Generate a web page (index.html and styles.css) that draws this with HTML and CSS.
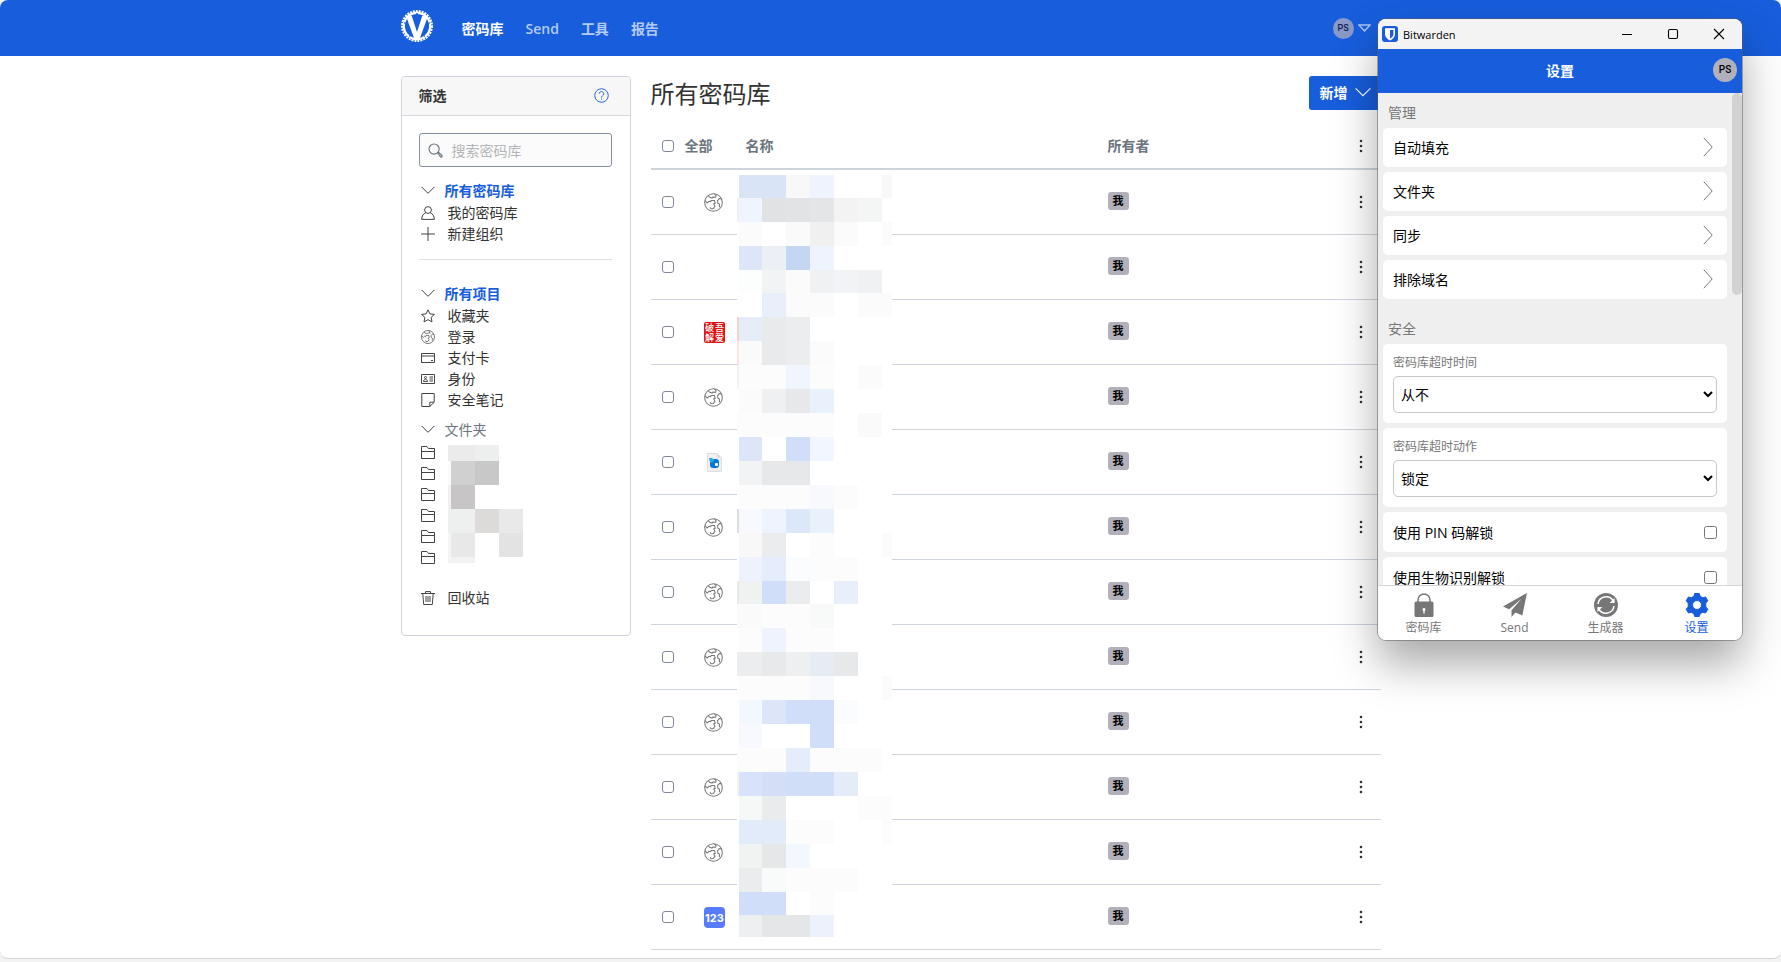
FILE: index.html
```html
<!DOCTYPE html>
<html lang="zh-CN">
<head>
<meta charset="utf-8">
<title>所有密码库</title>
<link rel="stylesheet" href="styles.css">
</head>
<body>
<svg class="sprite" aria-hidden="true">
  <symbol id="i-chevron" viewBox="0 0 14 14"><path d="M.5 3.800 7 10.300l6.500-6.500"/></symbol>
  <symbol id="i-right" viewBox="0 0 10 20"><path d="M.8.8 9.200 10 .8 19.200"/></symbol>
  <symbol id="i-user" viewBox="0 0 14 14"><circle cx="7" cy="4" r="3.400"/><path d="M4.800 6.800C2.500 7.600.7 9.800.7 13.400h12.600c0-3.600-1.800-5.800-4.100-6.600"/></symbol>
  <symbol id="i-plus" viewBox="0 0 14 14"><path d="M7 0v14M0 7h14"/></symbol>
  <symbol id="i-star" viewBox="0 0 14 14"><path d="m7 .8 1.900 4.100 4.500.5-3.300 3 .9 4.500L7 10.700l-4 2.200.9-4.500-3.300-3 4.500-.5z"/></symbol>
  <symbol id="i-globe" viewBox="0 0 20 20"><circle cx="10" cy="10" r="9.300"/><path d="M4.500 2.800 6 4.600l2.500.7.800-1 3 .2.400-1.700L11 1M1 8l2.300 2.600L5.200 8.800l1.800.4.500-1.400 3.500.1.800 2.900-1.600.7 1.300 2.300-1.600 2.500-2.700.3-.7-1.700M18.400 6l-2.300-.1-1.800 2.200.3 2.500 1.600 1 .1 3.500"/></symbol>
  <symbol id="i-card" viewBox="0 0 14 14"><path d="M.5 2.500h13v9H.5zM.5 5h13M10 9.500h2"/></symbol>
  <symbol id="i-id" viewBox="0 0 14 14"><path d="M.5 2.500h13v9H.5zM2.500 9.500c0-3 4-3 4 0zM8.500 5H12M8.500 7H12M8.500 9H12"/><circle cx="4.500" cy="5.500" r="1"/></symbol>
  <symbol id="i-note" viewBox="0 0 14 14"><path d="M.8.5h12.400v8.700l-4.400 4.300h-8zM13 9.200H8.800v4.300"/></symbol>
  <symbol id="i-folder" viewBox="0 0 14 14"><path d="M.5 13.500v-12H6l1.500 2h6v10zM.5 6.500h13"/></symbol>
  <symbol id="i-trash" viewBox="0 0 14 14"><path d="M0 2.500h14M4.500 2.300V.6h5v1.700M1.800 2.800l.9 10.700h8.600l.9-10.700M5 5v6M7 5v6M9 5v6"/></symbol>
  <symbol id="i-search" viewBox="0 0 16 16"><circle cx="6.500" cy="6.500" r="5.400"/><path d="m10.200 10.400.9-.6 3.700 3.500c.8.900-.6 2.200-1.400 1.400z"/></symbol>
  <symbol id="i-dots" viewBox="0 0 4 14"><circle cx="2" cy="2" r="1.300"/><circle cx="2" cy="7" r="1.300"/><circle cx="2" cy="12" r="1.300"/></symbol>
</svg>

<div class="browser">
  <header class="topbar">
    <div class="container topbar-inner">
      <svg class="logo" viewBox="0 0 32 32" role="img" aria-label="Vaultwarden">
        <circle class="logo-teeth" cx="16" cy="16" r="15"/>
        <circle class="logo-ring" cx="16" cy="16" r="13.200"/>
        <path class="logo-mark" d="M5 6h5.800L16 22l5.200-16H27l-8.200 22.500h-5.600z"/>
        <circle class="logo-dot" cx="16" cy="4" r="1"/><circle class="logo-dot" cx="3.800" cy="13" r=".8"/><circle class="logo-dot" cx="28.200" cy="13" r=".8"/><circle class="logo-dot" cx="8.700" cy="26" r=".8"/><circle class="logo-dot" cx="23.300" cy="26" r=".8"/>
      </svg>
      <nav class="mainnav">
        <a class="current" href="#vault">密码库</a>
        <a href="#send">Send</a>
        <a href="#tools">工具</a>
        <a href="#reports">报告</a>
      </nav>
      <button class="account" type="button" aria-label="账户">
        <span class="avatar">PS</span>
        <svg width="13" height="8" viewBox="0 0 13 8"><path d="M1 1h11L6.500 7z"/></svg>
      </button>
    </div>
  </header>

  <main class="container layout">
    <aside class="filters">
      <div class="filters-head">
        <h2>筛选</h2>
        <a href="#help" aria-label="帮助"><svg class="help" viewBox="0 0 16 16"><circle cx="8" cy="8" r="7.200"/><path d="M5.500 6.200c0-3.200 5-3.200 5 0 0 1.800-2.500 2-2.500 4M8 11.200v1.200"/></svg></a>
      </div>
      <div class="filters-body">
        <label class="search">
          <svg class="search-icon"><use href="#i-search"/></svg>
          <input type="search" placeholder="搜索密码库" aria-label="搜索密码库">
        </label>
        <section class="group">
          <h3 class="active"><svg class="ico"><use href="#i-chevron"/></svg><a href="#all">所有密码库</a></h3>
          <ul>
            <li><svg class="ico"><use href="#i-user"/></svg><a href="#mine">我的密码库</a></li>
            <li><svg class="ico"><use href="#i-plus"/></svg><a href="#org">新建组织</a></li>
          </ul>
        </section>
        <hr>
        <section class="group">
          <h3 class="active"><svg class="ico"><use href="#i-chevron"/></svg><a href="#items">所有项目</a></h3>
          <ul>
            <li><svg class="ico"><use href="#i-star"/></svg><a href="#fav">收藏夹</a></li>
            <li><svg class="ico"><use href="#i-globe"/></svg><a href="#login">登录</a></li>
            <li><svg class="ico"><use href="#i-card"/></svg><a href="#card">支付卡</a></li>
            <li><svg class="ico"><use href="#i-id"/></svg><a href="#identity">身份</a></li>
            <li><svg class="ico"><use href="#i-note"/></svg><a href="#note">安全笔记</a></li>
          </ul>
        </section>
        <section class="group folders">
          <h3><svg class="ico"><use href="#i-chevron"/></svg><a href="#folders">文件夹</a></h3>
          <ul>
            <li><svg class="ico"><use href="#i-folder"/></svg></li>
            <li><svg class="ico"><use href="#i-folder"/></svg></li>
            <li><svg class="ico"><use href="#i-folder"/></svg></li>
            <li><svg class="ico"><use href="#i-folder"/></svg></li>
            <li><svg class="ico"><use href="#i-folder"/></svg></li>
            <li><svg class="ico"><use href="#i-folder"/></svg></li>
          </ul>
          <svg class="folder-mask" viewBox="0 0 75 118" shape-rendering="crispEdges" aria-hidden="true">
            <path fill="#fff" d="M0 0h75v118H0z"/>
            <path fill="#ebebeb" d="M0 0h27v16H0z"/><path fill="#edeeee" d="M27 0h24v16H27z"/>
            <path fill="#fafafa" d="M0 16h3v24H0z"/><path fill="#d0d0d0" d="M3 16h24v24H3z"/><path fill="#c8c8c8" d="M27 16h24v24H27z"/>
            <path fill="#f1f1f1" d="M0 40h3v24H0z"/><path fill="#c8c5c7" d="M3 40h24v24H3z"/>
            <path fill="#eef0ef" d="M0 64h27v24H0z"/><path fill="#dcdbda" d="M27 64h24v24H27z"/><path fill="#e9e9e9" d="M51 64h24v24H51z"/>
            <path fill="#f4f4f4" d="M0 88h3v30H0z"/><path fill="#e8e8e8" d="M3 88h24v24H3z"/><path fill="#e3e3e3" d="M51 88h24v24H51z"/><path fill="#f2f2f2" d="M3 112h24v6H3z"/>
          </svg>
        </section>
        <section class="group trash">
          <ul><li><svg class="ico"><use href="#i-trash"/></svg><a href="#trash">回收站</a></li></ul>
        </section>
      </div>
    </aside>

    <section class="vault">
      <div class="vault-head">
        <h1>所有密码库</h1>
        <button class="add" type="button">新增 <svg class="ico"><use href="#i-chevron"/></svg></button>
      </div>
      <div class="table-wrap">
        <table>
          <colgroup><col class="c-check"><col class="c-icon"><col class="c-name"><col><col class="c-more"></colgroup>
          <thead>
            <tr>
              <th colspan="2"><label class="all"><input class="tick" type="checkbox"> 全部</label></th>
              <th>名称</th>
              <th>所有者</th>
              <th class="more"><button type="button" aria-label="选项"><svg class="dots"><use href="#i-dots"/></svg></button></th>
            </tr>
          </thead>
          <tbody id="rows"></tbody>
        </table>
        <svg class="name-mask" id="mask" viewBox="0 0 155 762" shape-rendering="crispEdges" aria-hidden="true"></svg>
      </div>
    </section>
  </main>
</div>

<div class="window">
  <div class="titlebar">
    <svg class="app-icon" viewBox="0 0 16 16"><rect width="16" height="16" rx="3" fill="#175ddc"/><path fill="#fff" d="M3 2.200h10v6c0 3-2.500 5-5 6.200-2.500-1.200-5-3.200-5-6.200z"/><path fill="#175ddc" d="M8 4h3.400v4.300c0 1.800-1.700 3.300-3.400 4.200z"/></svg>
    <span class="app-name">Bitwarden</span>
    <button type="button" aria-label="最小化"><svg viewBox="0 0 12 12"><path d="M1 6.500h10"/></svg></button>
    <button type="button" aria-label="最大化"><svg viewBox="0 0 12 12"><rect x="1.500" y="1.500" width="9" height="9" rx="1.500"/></svg></button>
    <button type="button" aria-label="关闭"><svg viewBox="0 0 12 12"><path d="m1 1 10 10M11 1 1 11"/></svg></button>
  </div>
  <div class="popup-head"><h2>设置</h2><span class="avatar">PS</span></div>
  <div class="popup-body">
    <div class="settings">
      <h3>管理</h3>
      <a class="box row" href="#autofill">自动填充<svg class="arrow"><use href="#i-right"/></svg></a>
      <a class="box row" href="#folder">文件夹<svg class="arrow"><use href="#i-right"/></svg></a>
      <a class="box row" href="#sync">同步<svg class="arrow"><use href="#i-right"/></svg></a>
      <a class="box row" href="#domains">排除域名<svg class="arrow"><use href="#i-right"/></svg></a>
      <h3 class="second">安全</h3>
      <div class="box field"><label for="timeout">密码库超时时间</label><select id="timeout"><option>从不</option></select></div>
      <div class="box field"><label for="action">密码库超时动作</label><select id="action"><option>锁定</option></select></div>
      <label class="box row tall">使用 PIN 码解锁<input type="checkbox"></label>
      <label class="box row tall">使用生物识别解锁<input type="checkbox"></label>
    </div>
    <div class="scroll"><div class="thumb"></div></div>
  </div>
  <nav class="tabs">
    <a href="#t1"><svg viewBox="0 0 24 24"><path fill="currentColor" d="M4 8.500h16a1.500 1.500 0 0 1 1.500 1.500v12.500A1.500 1.500 0 0 1 20 24H4a1.500 1.500 0 0 1-1.500-1.500V10A1.500 1.500 0 0 1 4 8.500z"/><path fill="none" stroke="currentColor" stroke-width="1.500" d="M6 9V7a6 6 0 0 1 12 0v2"/><path fill="#fff" d="M12 15a1.500 1.500 0 0 1 .7 2.800V20.500h-1.400v-2.700A1.500 1.500 0 0 1 12 15z"/></svg>密码库</a>
    <a href="#t2"><svg viewBox="0 0 24 24"><path fill="currentColor" d="M24 0 0 13.500l6.200 2.800L18.800 5.500 8.500 17.300V24l4-4.500 6.800 2.900z"/></svg>Send</a>
    <a href="#t3"><svg viewBox="0 0 24 24"><circle cx="12" cy="12" r="12" fill="currentColor"/><path fill="none" stroke="#fff" stroke-width="1.500" d="M4 11a8.200 8.200 0 0 1 15-3.500M20 13a8.200 8.200 0 0 1-15 3.500"/><path fill="#fff" d="M20.600 5v5h-5zM3.400 19v-5h5z"/></svg>生成器</a>
    <a class="on" href="#t4"><svg viewBox="0 0 24 24"><path fill="currentColor" stroke="currentColor" stroke-linejoin="round" fill-rule="evenodd" d="M9.700.5h4.600l.8 2.700 2.600 1.500 2.900-.7 2.200 3.800-2 2.200v4l2 2.200-2.200 3.800-2.900-.7-2.600 1.500-.8 2.700H9.700l-.8-2.700-2.600-1.500-2.900.7-2.200-3.800 2-2.200v-4l-2-2.200L3.400 4l2.900.7 2.600-1.500zM12 7.500a4.500 4.500 0 1 0 0 9 4.500 4.500 0 0 0 0-9z"/></svg>设置</a>
  </nav>
</div>
<script src="app.js"></script>
</body>
</html>
```

FILE: styles.css
```css
* { box-sizing: border-box; }

body {
  margin: 0;
  background: #f3f3f3;
  color: #333;
  font-family: "Open Sans", "Noto Sans CJK SC", sans-serif;
  font-size: 14px;
  line-height: 21px;
}

h1, h2, h3, ul { margin: 0; padding: 0; font-weight: 400; }
ul { list-style: none; }
a { color: inherit; text-decoration: none; }
button { font: inherit; padding: 0; border: 0; background: none; }

.sprite { display: none; }

.browser {
  min-height: calc(100vh - 3px);
  border-bottom: 1px solid #d5d5d5;
  border-radius: 8px;
  background: #fff;
  overflow: hidden;
}

.container { width: 980px; max-width: 100%; margin: 0 auto; }

.topbar { background: #175ddc; }
.topbar-inner { display: flex; align-items: center; height: 56px; }

.logo { width: 32px; height: 32px; margin-bottom: 4px; }
.logo-teeth { fill: none; stroke: #fff; stroke-width: 2; stroke-dasharray: 2 1; }
.logo-ring { fill: none; stroke: #fff; stroke-width: 2.2; }
.logo-mark { fill: #fff; }
.logo-dot { fill: #175ddc; }

.mainnav { display: flex; gap: 22px; margin-left: 29px; font-weight: 600; }
.mainnav a { color: #b4cbf5; }
.mainnav .current { color: #fff; font-weight: 700; }

.account { display: flex; align-items: center; gap: 4px; margin-left: auto; margin-right: 10px; }
.account svg { fill: none; stroke: #a9c3f3; stroke-width: 1.5; }
.avatar {
  width: 21px;
  height: 21px;
  border-radius: 50%;
  background: #8a9ac8;
  color: #0d2252;
  font-family: "Roboto", sans-serif;
  font-size: 9px;
  font-weight: 500;
  line-height: 21px;
  text-align: center;
}

.layout { display: flex; align-items: flex-start; gap: 20px; padding-top: 20px; }

.filters { width: 230px; border: 1px solid #ced4dc; border-radius: 4px; }
.filters-head {
  display: flex;
  align-items: center;
  justify-content: space-between;
  height: 39px;
  padding: 0 21px 2px 17px;
  border-bottom: 1px solid #d5d8dc;
  border-radius: 3px 3px 0 0;
  background: #f7f7f7;
}
.filters-head h2 { font-size: 14px; font-weight: 700; }
.filters-head a { display: flex; }
.help { width: 15px; height: 15px; fill: none; stroke: #175ddc; }
.filters-body { padding: 17px 18px 27px 17px; }

.search {
  display: flex;
  align-items: center;
  gap: 9px;
  height: 34px;
  padding: 0 8px;
  border: 1px solid #868f9f;
  border-radius: 3px;
  background: #fbfbfb;
}
.search-icon { flex: none; width: 15px; height: 15px; fill: none; stroke: #6c757d; stroke-width: 1.2; }
.search input { min-width: 0; flex: 1; padding: 0; border: 0; outline: 0; background: none; font: inherit; }
.search input::placeholder { color: #b3b5b8; }

.ico { flex: none; width: 14px; height: 14px; fill: none; stroke: #444; overflow: visible; }
.group { position: relative; margin-top: 13px; padding-left: 2px; }
.group h3 { display: flex; align-items: center; gap: 10px; height: 22px; padding-bottom: 2px; font-size: 14px; color: #6c757d; }
.group .active { color: #175ddc; font-weight: 700; }
.group li { display: flex; align-items: center; gap: 13px; height: 21px; }
hr { height: 1px; margin: 15px 0 23px; border: 0; background: #dfe1e3; }
hr + .group { margin-top: 0; }
.folders { margin-top: 9px; }
.trash { margin-top: 20px; }
.folder-mask { position: absolute; left: 29px; top: 26px; width: 75px; height: 118px; }

.vault { flex: 1; min-width: 0; }
.vault-head { display: flex; justify-content: space-between; align-items: center; }
.vault-head h1 { padding-top: 2px; font-size: 24px; line-height: 32px; }
.add {
  display: flex;
  align-items: center;
  gap: 7px;
  height: 34px;
  padding: 0 10px 2px 11px;
  border-radius: 3px;
  background: #175ddc;
  color: #fff;
  font-weight: 700;
}
.add .ico { stroke: #fff; width: 16px; height: 16px; }

.table-wrap { position: relative; margin-top: 15px; }
table { width: 100%; table-layout: fixed; border-collapse: separate; border-spacing: 0; }
.c-check { width: 44px; }
.c-icon { width: 42px; }
.c-name { width: 362px; }
.c-more { width: 40px; }
th { height: 45px; padding: 0 9px 2px; border-bottom: 2px solid #ced4dc; color: #6c757d; font-weight: 700; text-align: left; }
td { height: 65px; padding: 0 9px; border-bottom: 1px solid #ced4dc; vertical-align: middle; }
td:first-child, th:first-child { padding-left: 11px; }
.all { display: flex; align-items: center; gap: 11px; }
.tick {
  display: block;
  appearance: none;
  width: 12px;
  height: 12px;
  margin: 0;
  border: 1px solid #7f8898;
  border-radius: 3px;
  background: #fff;
}
.item-icon { display: block; width: 21px; height: 21px; }
.globe { width: 19px; height: 19px; margin-top: 1px; fill: none; stroke: #777; stroke-width: 1.1; }
.seal-text, .num-text { fill: #fff; font-family: "Noto Sans CJK SC", sans-serif; font-size: 9px; font-weight: 500; }
.num-text { font-family: "Inter", sans-serif; font-size: 11px; font-weight: 700; text-anchor: middle; }
.badge {
  display: block;
  width: 21px;
  height: 18px;
  margin-bottom: 2px;
  border-radius: 3px;
  background: #b2b0bb;
  color: #000;
  font-size: 11px;
  font-weight: 700;
  line-height: 18px;
  text-align: center;
}
.more { text-align: right; }
.more button { display: block; margin-left: auto; padding: 0 9px; }
.dots { display: block; width: 4px; height: 14px; fill: #333; }
.name-mask { position: absolute; left: 86px; top: 50px; width: 155px; height: 762px; }

.window {
  position: absolute;
  top: 19px;
  right: 39px;
  display: flex;
  flex-direction: column;
  width: 364px;
  height: 621px;
  border-radius: 8px;
  background: #fff;
  color: #000;
  overflow: hidden;
  box-shadow: 0 0 0 1px rgba(90, 90, 90, .5), 0 24px 44px rgba(0, 0, 0, .34);
}
.titlebar { display: flex; align-items: center; height: 30px; padding-left: 4px; background: #f3f3f3; font-size: 11px; }
.app-icon { width: 16px; height: 16px; }
.app-name { margin: 0 auto 0 5px; }
.titlebar button { display: flex; justify-content: center; width: 46px; }
.titlebar button svg { width: 12px; height: 12px; fill: none; stroke: #000; stroke-width: 1.1; }

.popup-head {
  display: grid;
  grid-template-columns: 1fr auto 1fr;
  align-items: center;
  height: 44px;
  padding: 0 5px 2px;
  background: #175ddc;
  color: #fff;
}
.popup-head h2 { grid-column: 2; font-size: 14px; font-weight: 700; }
.popup-head .avatar { justify-self: end; width: 24px; height: 24px; background: #b2b0bb; color: #000; font-size: 10px; line-height: 24px; }

.popup-body { display: flex; flex: 1; min-height: 0; background: #efefef; overflow: hidden; }
.settings { flex: 1; padding: 9px 5px 0; }
.settings h3 { margin-bottom: 5px; padding-left: 5px; font-size: 14px; color: #777; }
.settings .second { margin-top: 19px; }
.box { margin-bottom: 5px; padding: 0 10px; border-radius: 5px; background: #fff; }
.row { display: flex; align-items: center; justify-content: space-between; height: 39px; }
.tall { height: 40px; }
.row input { width: 13px; height: 13px; margin: 0; }
.arrow { width: 10px; height: 20px; margin: 0 4px 2px 0; fill: none; stroke: #777; }
.field { padding-top: 10px; padding-bottom: 10px; }
.field label { display: block; margin-bottom: 4px; color: #777; font-size: 12px; line-height: 18px; }
.field select { display: block; width: 100%; height: 37px; padding: 0 3px; border: 1px solid #c8c8c8; border-radius: 5px; background: #fff; color: #000; font: inherit; }
.scroll { width: 10px; }
.thumb { height: 202px; border-radius: 5px; background: #d2d2d2; }

.tabs { display: flex; height: 55px; padding-top: 7px; border-top: 1px solid #d5d5d5; background: #fff; color: #777; font-size: 12px; line-height: 18px; }
.tabs a { display: flex; flex: 1; flex-direction: column; align-items: center; gap: 2px; }
.tabs svg { width: 24px; height: 24px; }
.tabs .on { color: #175ddc; }
```

FILE: app.js
```js
const icons = {
  globe: '<svg class="item-icon globe"><use href="#i-globe"/></svg>',
  none: '',
  seal: '<svg class="item-icon" viewBox="0 0 21 21"><rect width="21" height="21" rx="2" fill="#e01414"/><text class="seal-text" x="1" y="9">破</text><text class="seal-text" x="11" y="9">吾</text><text class="seal-text" x="1" y="19">解</text><text class="seal-text" x="11" y="19">爱</text></svg>',
  page: '<svg class="item-icon" viewBox="0 0 21 21"><path d="M3.500 1.500h9.500l4.500 4.500v13.500h-14z" fill="#f1f1f1" stroke="#ddd"/><path d="M13 1.500V6h4.500z" fill="#ddd"/><rect x="6" y="7" width="9" height="9" rx="3" fill="#0878d8"/><path d="M5 6h3l2 2-2 3-2-1z" fill="#23a9ee"/><rect x="11" y="11" width="3" height="3" rx="1" fill="#fff"/></svg>',
  num: '<svg class="item-icon" viewBox="0 0 21 21"><rect width="21" height="21" rx="4" fill="#567bff"/><text class="num-text" x="10.500" y="14.500">123</text></svg>'
};

const items = ['globe', 'none', 'seal', 'globe', 'page', 'globe', 'globe', 'globe', 'globe', 'globe', 'globe', 'num'];

document.getElementById('rows').innerHTML = items.map((kind) => `
  <tr>
    <td><input class="tick" type="checkbox" aria-label="选择"></td>
    <td>${icons[kind]}</td>
    <td></td>
    <td><span class="badge">我</span></td>
    <td class="more"><button type="button" aria-label="选项"><svg class="dots"><use href="#i-dots"/></svg></button></td>
  </tr>`).join('');

// Blocks hiding item names: column edges, row edges and the fill of each block.
const cols = [0, 2, 25, 49, 73, 97, 121, 145, 155];
const tops = [0, 23, 47, 71, 95, 118, 142, 166, 190, 214, 238, 262, 286, 310, 334, 358, 382, 406, 429, 453, 477, 501, 525, 549, 573, 597, 621, 645, 669, 693, 717, 740, 762];
const fills = [
  '- d9e5f7 d9e5f7 f8f8f8 eef3fd - - f8f8f8',
  'f0f0f0 eff4fe e1e2e3 e2e3e4 e4e5e6 f3f3f3 f4f6f5 -',
  '- fbfbfb - fafafa f0f0f0 fbfbfb - fbfbfb',
  '- dde6f9 ecf0f5 c5d6f3 eef4fd - - -',
  '- fcfefd f2f3f4 fbfbfb eff1f3 f2f3f6 eff1f3 -',
  '- - e8effb fbfbfb fbfbfb - fbfbfb fbfbfb',
  'f9cfcf e6edf9 e8eaeb ebedee - - - -',
  'fde2e2 fafafa e8eaeb ebedee fbfbfb - - -',
  'f2f2f2 fcfcfc fcfcfc f0f5fe fcfcfc - fbfbfb -',
  '- fbfbfb eff0f2 e7e8e9 e9f1fc - - -',
  'fcfcfc fcfcfc fcfcfc fcfcfc fcfcfc - fafafa -',
  '- dde6f9 - d0defa f2f6fe - - -',
  '- f2f3f4 e7e8ea e7e8ea - - - -',
  '- fcfcfc fcfcfc fcfcfc f7f9fd fcfcfc - -',
  'dddddd f7f9fe eef3fd dde7fa e9f1fd - - -',
  '- f8f8f8 ebecee - fcfcfc - - fbfbfb',
  '- edf2fd e5ecfb fafcfe fcfcfc fcfcfc - -',
  'e8e8e8 f0f2f1 d0defa ebecee - e8eefb - -',
  'fafafa fafafa fcfcfc fcfcfc f7faf9 - - -',
  '- fcfcfc eef3fd fcfcfc fcfcfc - - -',
  'ecedee ecedee e7e9ea eeeff1 e7ecf4 e7e8ea - -',
  '- fcfcfc fcfcfc fcfcfc f7f9fc - - fbfbfb',
  '- f3f7fe dde6f9 d0defa d0defa fafcfe - -',
  '- f7f9fe - - d0defa - - -',
  'fcfcfc fcfcfc fcfcfc e5ecfb fcfcfc fcfcfc fcfcfc -',
  'f2f2f2 d8e2fa d4dff7 d0def8 d0def8 e4ecf9 - -',
  '- f6f8f7 e9ebec - - - fcfcfc fcfcfc',
  '- e2ebf9 e2ebf9 fcfcfc fcfcfc - - fcfcfc',
  '- f1f3f2 e6e7e9 f3f7fe - - - -',
  '- ebecee f8fbfa fcfcfc fcfcfc fcfcfc - -',
  '- d0defa d0defa - fcfcfc - - -',
  '- eeeff1 e5e6e8 e5e6e8 edf1fc - - -'
];

let blocks = '<rect width="155" height="762" fill="#fff"/>';
fills.forEach((line, r) => line.split(' ').forEach((fill, c) => {
  if (fill !== '-') {
    blocks += `<rect x="${cols[c]}" y="${tops[r]}" width="${cols[c + 1] - cols[c]}" height="${tops[r + 1] - tops[r]}" fill="#${fill}"/>`;
  }
}));
document.getElementById('mask').innerHTML = blocks;
```
